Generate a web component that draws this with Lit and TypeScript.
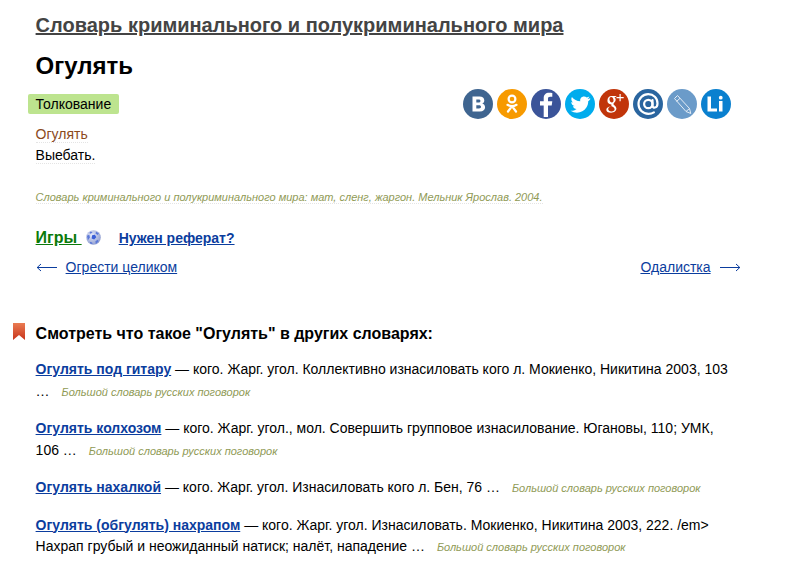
import { LitElement, html, css, svg } from "lit";
import { customElement } from "lit/decorators.js";

interface Related {
  term: string;
  text: string;
  wrapped: string;
}

const related: Related[] = [
  {
    term: "Огулять под гитару",
    text: " — кого. Жарг. угол. Коллективно изнасиловать кого л. Мокиенко, Никитина 2003, 103",
    wrapped: "…",
  },
  {
    term: "Огулять колхозом",
    text: " — кого. Жарг. угол., мол. Совершить групповое изнасилование. Югановы, 110; УМК,",
    wrapped: "106 …",
  },
  {
    term: "Огулять нахалкой",
    text: " — кого. Жарг. угол. Изнасиловать кого л. Бен, 76 …",
    wrapped: "",
  },
  {
    term: "Огулять (обгулять) нахрапом",
    text: " — кого. Жарг. угол. Изнасиловать. Мокиенко, Никитина 2003, 222. /em>",
    wrapped: "Нахрап грубый и неожиданный натиск; налёт, нападение …",
  },
];

// white marks inside the round share buttons, 30x30 box
const shareButtons = [
  {
    color: "#3f6590",
    mark: svg`<path fill="#fff" fill-rule="evenodd" d="M9.500 7.500h7c3 0 4.800 1.600 4.800 3.900 0 1.600-.9 2.700-2.200 3.200 1.800.4 3 1.800 3 3.700 0 2.700-2 4.200-5.200 4.200H9.500zm3.800 3v3h2.400c1.100 0 1.800-.6 1.800-1.500s-.7-1.500-1.800-1.500zm0 5.700v3.300h2.700c1.300 0 2-.6 2-1.650s-.7-1.650-2-1.650z"/>`,
  },
  {
    color: "#f79a00",
    mark: svg`<g fill="none" stroke="#fff" stroke-width="2.200" stroke-linecap="round"><circle cx="15" cy="10" r="3.400"/><path d="M10.500 15.800c2.800 1.700 6.200 1.700 9 0M15 17.200l-4 5.300M15 17.200l4 5.300"/></g>`,
  },
  {
    color: "#3b5499",
    mark: svg`<path fill="#fff" d="M17 28V16.500h3.700l.6-4.300H17V9.700c0-1.300.4-2 2.100-2h2.200V3.900c-.5-.1-1.800-.2-3.200-.2-3.300 0-5.400 1.900-5.400 5.500v3H9v4.300h3.700V28z"/>`,
  },
  {
    color: "#00aced",
    mark: svg`<path fill="#fff" d="M25 9.200c-.8.400-1.500.6-2.400.7.900-.5 1.500-1.300 1.800-2.300-.8.500-1.700.8-2.600 1-1.700-1.800-4.500-1.500-5.900.3-.7.900-.9 2.100-.6 3.400-3.400-.2-6.400-1.800-8.400-4.300-1.100 1.900-.6 4.300 1.300 5.500-.7 0-1.300-.2-1.900-.5 0 2 1.400 3.700 3.300 4.100-.6.200-1.200.2-1.800.1.500 1.600 2 2.800 3.800 2.800-1.800 1.400-4 2-6.100 1.800 5.600 3.500 12.600 2 15.900-3.300 1.200-1.900 1.900-4.300 1.800-6.300.9-.6 1.600-1.300 2.200-2.200z"/>`,
  },
  {
    color: "#c1350a",
    mark: svg`<g fill="#fff"><path fill-rule="evenodd" d="M12.600 7h5.200l-1.300.9h-1.300c1 .7 1.500 1.700 1.500 2.900 0 2.400-2.300 3-2.300 4.200 0 1.200 3 1.900 3 4.600 0 2.400-2.300 4.100-5.300 4.100-3 0-4.800-1.300-4.800-3 0-1.900 2-3.300 4.700-3.300h.8c-.3-.4-.5-.8-.5-1.200 0-.3.100-.5.200-.8-2.500.2-4.100-1.500-4.100-3.600C8.400 8.700 10.200 7 12.600 7zm-.5 1.100c-1.200.1-1.800 1.200-1.600 2.700.2 1.500 1.200 2.700 2.400 2.700 1.200-.1 1.800-1.100 1.600-2.700-.2-1.500-1.200-2.800-2.400-2.700zm.4 9.500c-1.900 0-3.300 1-3.300 2.400 0 1.400 1.400 2.500 3.300 2.500 1.900 0 3.100-.9 3.100-2.200 0-1.200-.9-1.900-2.500-2.700z"/><path d="M20.500 5h1.200v3h3v1.200h-3v3h-1.200v-3h-3V8h3z"/></g>`,
  },
  {
    color: "#2a659f",
    mark: svg`<g fill="none" stroke="#fff" stroke-width="2.200"><circle cx="15.300" cy="15" r="4.200"/><path stroke-linecap="round" d="M19.500 11v5.700c0 2.800 5 2.800 5-2.200 0-5.500-4-9.300-9.300-9.300C9.800 5.200 5.500 9.500 5.500 15c0 5.700 4.300 9.800 9.900 9.800 2 0 3.800-.4 5.500-1.400"/></g>`,
  },
  {
    color: "#6b9bc9",
    mark: svg`<g fill="none" stroke="#e4edf6" stroke-width="1" stroke-linejoin="round"><path d="M7.500 9.500 10.500 6.500 22.500 19.500l1.300 5-4.800-2z"/><path d="M9.500 12.500l3.500-3.200M19 22.500l3.500-3"/></g>`,
  },
  {
    color: "#0a80cf",
    mark: svg`<path fill="#fff" d="M6.500 7.500H10v12h6v3H6.500zM18 12h3.500v10.500H18zM19.750 6.800a1.900 1.900 0 1 1 0 3.800 1.900 1.900 0 0 1 0-3.800z"/>`,
  },
];

@customElement("app-root")
export class AppRoot extends LitElement {
  private _ball() {
    return html`<svg class="ball" width="15" height="15" viewBox="0 0 16 16">
      <defs>
        <radialGradient id="ballShade" cx="0.4" cy="0.35" r="0.8">
          <stop offset="0" stop-color="#e6eafa" />
          <stop offset="1" stop-color="#7f8fc8" />
        </radialGradient>
      </defs>
      <circle cx="8" cy="8" r="7.800" fill="url(#ballShade)" />
      <path fill="#3a5ed6" d="M6.500 5.500 9.500 5l1.500 2.800L8.700 10 6 9z" />
      <path fill="#5b78d8" d="M1 6 3.500 5l.7 3L2 11zM11 1.800l2.800 2-1.500 1.500L10 3.500zM5 1.500l2 1-2 1.500-1.500-.8zM10 12l2.500-1.500 1 1.500-3 2.800zM4 12.500l2.500.8.5 2-2.500-.8z" />
    </svg>`;
  }

  private _arrow(flip: boolean) {
    return html`<svg class="arrow ${flip ? "flip" : ""}" width="21" height="9" viewBox="0 0 21 9">
      <path fill="none" stroke="#0b3d9e" d="M1 4.500h20M5 1 1.200 4.500 5 8" />
    </svg>`;
  }

  protected render() {
    return html`
      <div class="page">
        <a class="dict-title" href="#">Словарь криминального и полукриминального мира</a>
        <h1>Огулять</h1>

        <div class="tag-row">
          <span class="tag">Толкование</span>
          <div class="share">
            ${shareButtons.map(
              (b) => html`<svg class="share-btn" width="30" height="30" viewBox="0 0 30 30">
                <circle cx="15" cy="15" r="15" fill=${b.color} />
                ${b.mark}
              </svg>`
            )}
          </div>
        </div>

        <div class="entry-term"><span>Огулять</span></div>
        <div class="entry-text"><span>Выебать.</span></div>
        <div class="citation">
          <span>Словарь криминального и полукриминального мира: мат, сленг, жаргон. Мельник Ярослав. 2004.</span>
        </div>

        <div class="promo">
          <a class="games" href="#">Игры ${this._ball()}</a>
          <a class="essay" href="#">Нужен реферат?</a>
        </div>

        <div class="pager">
          <div class="pager-item">
            ${this._arrow(false)}
            <a href="#">Огрести целиком</a>
          </div>
          <div class="pager-item">
            <a href="#">Одалистка</a>
            ${this._arrow(true)}
          </div>
        </div>

        <h2>
          <svg class="bookmark" width="12" height="17" viewBox="0 0 12 17">
            <defs>
              <linearGradient id="markFill" x1="0" y1="0" x2="0" y2="1">
                <stop offset="0" stop-color="#ea7c52" />
                <stop offset="1" stop-color="#c8341c" />
              </linearGradient>
            </defs>
            <path fill="url(#markFill)" d="M0 0h12v17L6 12 0 17z" />
          </svg>
          Смотреть что такое "Огулять" в других словарях:
        </h2>

        ${related.map(
          (r) => html`<p class="related">
            <a href="#">${r.term}</a>${r.text}${r.wrapped ? html`<br />${r.wrapped}` : ""}
            <span class="source">Большой словарь русских поговорок</span>
          </p>`
        )}
      </div>
    `;
  }

  static styles = css`
    :host {
      display: block;
      height: 565px;
      overflow: hidden;
      background: #fff;
      font-family: "Liberation Sans", Arial, sans-serif;
      color: #000;
    }

    .page {
      width: 705px;
      padding: 13px 0 0 35.6px;
    }

    a {
      color: #0b3d9e;
    }

    .dict-title {
      display: block;
      font-size: 20px;
      line-height: 24px;
      font-weight: bold;
      color: #444;
    }

    h1 {
      margin: 15px 0 0;
      font-size: 24px;
      line-height: 28px;
      font-weight: bold;
    }

    .tag-row {
      display: flex;
      align-items: center;
      height: 30px;
      margin-top: 9px;
    }

    .tag {
      margin-left: -8px;
      width: 83px;
      padding-left: 8px;
      font-size: 14px;
      line-height: 20px;
      border-radius: 2px;
      background: #bde48f;
    }

    .share {
      display: flex;
      gap: 4px;
      margin-left: 344px;
    }

    .entry-term,
    .entry-text {
      font-size: 14px;
      line-height: 21px;
    }

    .entry-term {
      margin-top: 5px;
      color: #8b4a1c;
    }

    .entry-term span,
    .entry-text span,
    .citation span {
      border-bottom: 1px dotted #e4e4e4;
    }

    .citation {
      margin-top: 23px;
      font-size: 11px;
      line-height: 16px;
      font-style: italic;
      color: #8f9a55;
    }

    .promo {
      display: flex;
      align-items: baseline;
      margin-top: 23px;
    }

    .games {
      font-size: 16px;
      line-height: 20px;
      font-weight: bold;
      color: #0a7a0a;
    }

    .ball {
      vertical-align: -2px;
      margin: 0 4px 0 4px;
    }

    .essay {
      margin-left: 14px;
      font-size: 14px;
      font-weight: bold;
    }

    .pager {
      display: flex;
      justify-content: space-between;
      margin-top: 9px;
      font-size: 14px;
      line-height: 20px;
    }

    .pager-item {
      display: flex;
      align-items: center;
      gap: 9px;
    }

    .arrow.flip {
      transform: scaleX(-1);
    }

    h2 {
      position: relative;
      margin: 47px 0 0;
      font-size: 16px;
      line-height: 20px;
      font-weight: bold;
    }

    .bookmark {
      position: absolute;
      left: -23px;
      top: -1px;
    }

    .related {
      margin: 15px 0 0;
      font-size: 14px;
      line-height: 21.500px;
    }

    .related a {
      font-weight: bold;
    }

    .source {
      margin-left: 8px;
      font-size: 11px;
      font-style: italic;
      color: #8f9a55;
    }
  `;
}
